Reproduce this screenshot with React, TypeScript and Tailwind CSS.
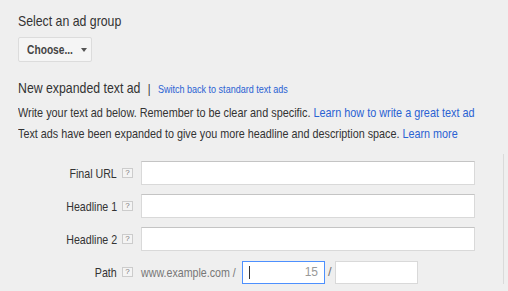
import React from "react"

const font = { fontFamily: "'Liberation Sans', Arial, sans-serif" }

// the screenshot's type is squeezed horizontally (narrow Arial), so lines are scaled on x
function Help() {
  return (
    <span className="ml-[5px] flex h-[10px] w-[11px] shrink-0 items-center justify-center border border-[#cccccc] bg-[#f4f4f4] text-[8px] leading-none text-[#777]">
      ?
    </span>
  )
}

function Row({ label }: { label: string }) {
  return (
    <div className="flex h-[24px] items-center">
      <div className="w-[117px] shrink-0 whitespace-nowrap text-right">
        <span className="inline-block origin-right scale-x-[0.82] text-[13px] text-[#333]">{label}</span>
      </div>
      <Help />
      <input className="ml-[8px] h-[24px] w-[334px] border border-[#d9d9d9] border-t-[#c4c4c4] bg-white outline-none" />
    </div>
  )
}

export default function App() {
  return (
    <div className="h-[291px] w-[508px] overflow-hidden bg-[#efefef] text-[#333]" style={font}>
      <div className="px-[18px] pt-[12px]">
        <div className="origin-left scale-x-[0.82] whitespace-nowrap text-[15px] leading-[18px]">Select an ad group</div>
        <button className="mt-[7px] flex h-[25px] w-[74px] items-center justify-center rounded-[2px] border border-[#dcdcdc] bg-[#f5f5f5] text-[#444]">
          <span className="inline-block scale-x-[0.85] whitespace-nowrap text-[12px] font-bold">Choose...</span>
          <svg className="ml-[3px]" width="6" height="4" viewBox="0 0 6 4">
            <path d="M0 0h6L3 4z" fill="#555" />
          </svg>
        </button>
        <div className="mt-[17px] flex origin-left scale-x-[0.82] items-baseline whitespace-nowrap text-[15px] leading-[18px]">
          <span>New expanded text ad</span>
          <span className="ml-[9px] text-[13px]">|</span>
          <a className="ml-[9px] text-[11px] text-[#2a62d3]">Switch back to standard text ads</a>
        </div>
        <p className="mt-[6px] origin-left scale-x-[0.835] whitespace-nowrap text-[13px] leading-[17px]">
          Write your text ad below. Remember to be clear and specific.{" "}
          <a className="text-[#2a62d3]">Learn how to write a great text ad</a>
        </p>
        <p className="mt-[4px] origin-left scale-x-[0.83] whitespace-nowrap text-[13px] leading-[17px]">
          Text ads have been expanded to give you more headline and description space.{" "}
          <a className="text-[#2a62d3]">Learn more</a>
        </p>
      </div>
      <div className="mt-[12px] w-[504px] border-r border-[#dadada] pt-[7px]">
        <div className="flex flex-col gap-[9px]">
          <Row label="Final URL" />
          <Row label="Headline 1" />
          <Row label="Headline 2" />
          <div className="flex h-[24px] items-center">
            <div className="w-[117px] shrink-0 whitespace-nowrap text-right">
              <span className="inline-block origin-right scale-x-[0.82] text-[13px] text-[#333]">Path</span>
            </div>
            <Help />
            <div className="ml-[8px] w-[98px] shrink-0 whitespace-nowrap">
              <span className="inline-block origin-left scale-x-[0.82] text-[13px] text-[#777]">www.example.com /</span>
            </div>
            <div className="ml-[3px] flex h-[23px] w-[83px] items-center justify-between border border-[#4d90fe] bg-white px-[6px] text-[12px] text-[#999]">
              <span className="h-[13px] w-px bg-[#333]" />
              <span>15</span>
            </div>
            <span className="ml-[3px] text-[13px] text-[#777]">/</span>
            <input className="ml-[3px] h-[23px] w-[83px] border border-[#d9d9d9] bg-white outline-none" />
          </div>
        </div>
      </div>
    </div>
  )
}
